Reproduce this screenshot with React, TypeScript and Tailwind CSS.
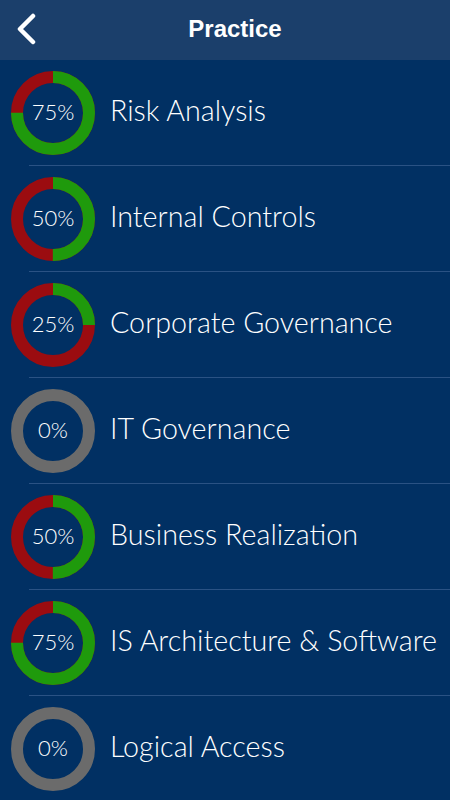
import React from "react";

type Topic = { name: string; pct: number };

const topics: Topic[] = [
  { name: "Risk Analysis", pct: 75 },
  { name: "Internal Controls", pct: 50 },
  { name: "Corporate Governance", pct: 25 },
  { name: "IT Governance", pct: 0 },
  { name: "Business Realization", pct: 50 },
  { name: "IS Architecture & Software", pct: 75 },
  { name: "Logical Access", pct: 0 },
];

const R = 36;
const C = 2 * Math.PI * R;

const Ring = ({ pct }: { pct: number }) => {
  return (
    <div className="relative w-[84px] h-[84px] shrink-0">
      <svg width="84" height="84" viewBox="0 0 84 84" className="-rotate-90">
        <circle cx="42" cy="42" r={R} fill="none" stroke={pct === 0 ? "#6b6b6b" : "#9b0c10"} strokeWidth="12" />
        {pct > 0 && (
          <circle
            cx="42"
            cy="42"
            r={R}
            fill="none"
            stroke="#1f9a0c"
            strokeWidth="12"
            strokeDasharray={`${(pct / 100) * C} ${C}`}
          />
        )}
      </svg>
      <div className="absolute inset-0 flex items-center justify-center pb-[3px] text-white text-[22px] font-light">
        {pct}%
      </div>
    </div>
  );
};

export default function App() {
  return (
    <div className="w-[450px] h-[800px] bg-[#013063] overflow-hidden" style={{ fontFamily: "Lato, 'Liberation Sans', sans-serif" }}>
      {/* Header */}
      <div className="h-[60px] bg-[#1b3f6b] flex items-center">
        <button className="w-[44px] h-[60px] flex items-center justify-center pl-[10px] pb-[2px]">
          <svg width="22" height="32" viewBox="0 0 22 32">
            <path d="M17 3 L4 16 L17 29" fill="none" stroke="white" strokeWidth="4.5" strokeLinecap="round" strokeLinejoin="round" />
          </svg>
        </button>
        <div
          className="flex-1 text-center pr-[24px] pb-[3px] text-white text-[24px] font-bold"
          style={{ fontFamily: "'Liberation Sans', Arial, sans-serif" }}
        >
          Practice
        </div>
      </div>

      {/* Rows */}
      {topics.map((t, i) => (
        <div key={i} className="h-[106px] flex flex-col">
          <div className="flex-1 flex items-center pl-[11px] gap-[15px]">
            <Ring pct={t.pct} />
            <span className="pb-[4px] text-white text-[28.7px] font-light whitespace-nowrap">{t.name}</span>
          </div>
          {i < topics.length - 1 && <div className="ml-[29px] h-px bg-[#2a5284]" />}
        </div>
      ))}
    </div>
  );
}
